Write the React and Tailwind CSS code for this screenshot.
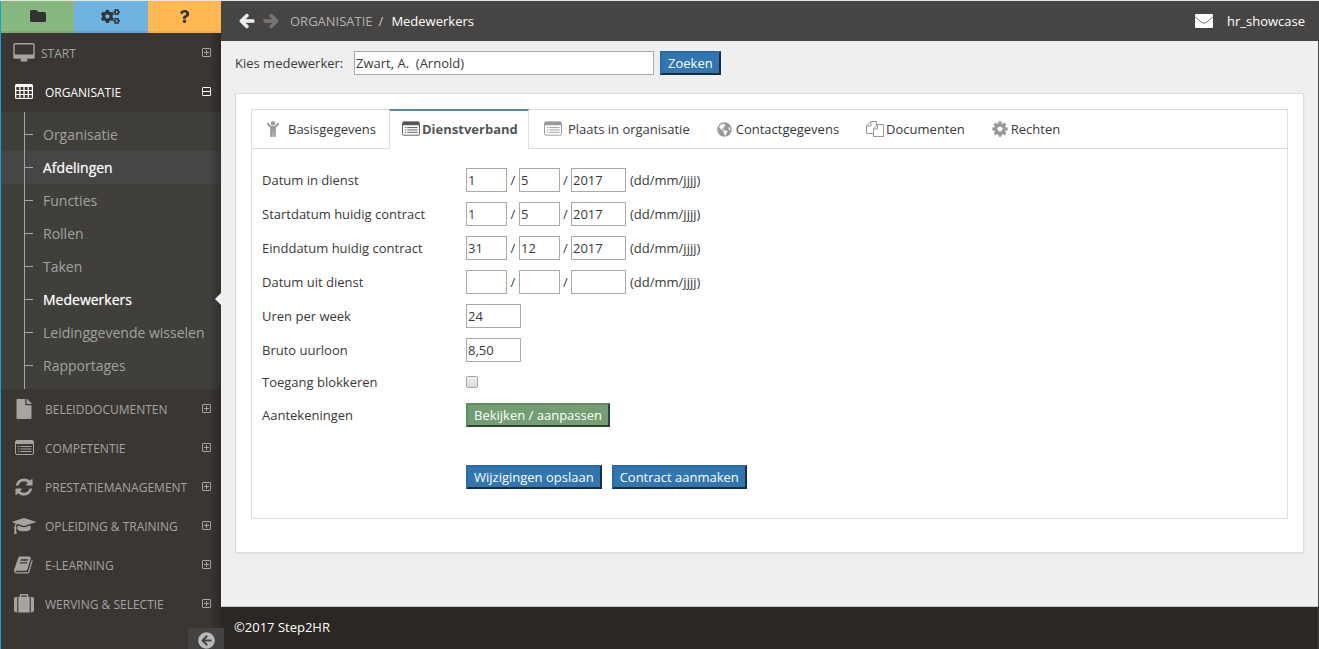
import React from "react";
import { FaFolder, FaCogs, FaQuestion, FaFile, FaArrowLeft, FaArrowRight, FaArrowCircleLeft, FaChild, FaGlobeAmericas } from "react-icons/fa";

function Glyph({ box = "0 0 1792 1792", d, className }) {
  return (
    <svg viewBox={box} className={className} fill="currentColor" fillRule="evenodd" aria-hidden="true">
      <path d={d} />
    </svg>
  );
}

const DESKTOP =
  "M1728 992v-832q0-13-9.500-22.500t-22.500-9.500h-1600q-13 0-22.500 9.500t-9.500 22.500v832q0 13 9.500 22.500t22.500 9.500h1600q13 0 22.500-9.500t9.500-22.500zm128-832v1088q0 66-47 113t-113 47h-544q0 37 16 77.500t32 71 16 43.500q0 26-19 45t-45 19h-512q-26 0-45-19t-19-45q0-14 16-44t32-70 16-78h-544q-66 0-113-47t-47-113v-1088q0-66 47-113t113-47h1600q66 0 113 47t47 113z";
const TABLE =
  "M1.500 0h15a1.500 1.500 0 0 1 1.500 1.500v12a1.500 1.500 0 0 1-1.500 1.500h-15a1.500 1.500 0 0 1-1.500-1.500v-12a1.500 1.500 0 0 1 1.500-1.500z" +
  "M1.300 3v3h2.900v-3zM5.500 3v3h2.900v-3zM9.700 3v3h2.900v-3zM13.900 3v3h2.900v-3z" +
  "M1.300 7v3h2.900v-3zM5.500 7v3h2.900v-3zM9.700 7v3h2.900v-3zM13.900 7v3h2.900v-3z" +
  "M1.300 11v3h2.900v-3zM5.500 11v3h2.900v-3zM9.700 11v3h2.900v-3zM13.900 11v3h2.900v-3z";
const REFRESH =
  "M1639 1056q0 5-1 7-64 268-268 434.500t-478 166.500q-146 0-282.500-55t-243.500-157l-129 129q-19 19-45 19t-45-19-19-45v-448q0-26 19-45t45-19h448q26 0 45 19t19 45-19 45l-137 137q71 66 161 102t187 36q134 0 250-65t186-179q11-17 53-117 8-23 30-23h192q13 0 22.500 9.500t9.500 22.500zm25-800v448q0 26-19 45t-45 19h-448q-26 0-45-19t-19-45 19-45l138-138q-148-137-349-137-134 0-250 65t-186 179q-11 17-53 117-8 23-30 23h-199q-13 0-22.500-9.500t-9.500-22.500v-7q65-268 270-434.500t480-166.500q146 0 284 55.500t245 156.500l130-129q19-19 45-19t45 19 19 45z";
const CAP =
  "M1774 836l18 316q4 69-82 128t-235 93.500-323 34.500-323-34.500-235-93.500-82-128l18-316 574 181q22 7 48 7t48-7zm530-324q0 23-22 31l-1120 352q-4 1-10 1t-10-1l-652-206q-43 34-71 111.500t-34 178.500q63 36 63 109 0 69-58 107l58 433q2 14-8 25-9 11-24 11h-192q-15 0-24-11-10-11-8-25l58-433q-58-38-58-107 0-73 65-111 11-207 98-330l-333-104q-22-8-22-31t22-31l1120-352q4-1 10-1t10 1l1120 352q22 8 22 31z";
const BOOK =
  "M1639 478q40 57 18 129l-275 906q-19 64-76.500 107.500t-122.500 43.500h-923q-77 0-148.500-53.500t-99.500-131.500q-24-67-2-127 0-4 3-27t4-37q1-8-3-21.500t-3-19.500q2-11 8-21t16.500-23.500 16.500-23.500q23-38 45-91.500t30-91.500q3-10 .5-30t-.5-28q3-11 17-28t17-23q21-36 42-92t25-90q1-9-2.500-32t.5-28q4-13 22-30.500t22-22.500q19-26 42.500-84.500t27.500-96.500q1-8-3-25.500t-2-26.500q2-8 9-18t18-23 17-21q8-12 16.500-30.500t15-35 16-36 19.500-32 26.500-23.500 36-11.500 47.500 5.500l-1 3q38-9 51-9h761q74 0 114 56t18 130l-274 906q-36 119-71.500 153.500t-128.500 34.500h-869q-27 0-38 15-11 16-1 43 24 70 144 70h923q29 0 56-15.500t35-41.500l300-987q7-22 5-57 38 15 59 43zm-1064 2q-4 13 2 22.500t20 9.500h608q13 0 25.500-9.500t16.500-22.500l21-64q4-13-2-22.500t-20-9.500h-608q-13 0-25.500 9.500t-16.500 22.500zm-83 256q-4 13 2 22.500t20 9.500h608q13 0 25.500-9.500t16.500-22.500l21-64q4-13-2-22.500t-20-9.500h-608q-13 0-25.500 9.500t-16.500 22.500z";
const SUITCASE =
  "M640 256h512v-128h-512v128zm-352 0v1408h-64q-92 0-158-66t-66-158v-960q0-92 66-158t158-66h64zm1120 0v1408h-1024v-1408h128v-160q0-40 28-68t68-28h576q40 0 68 28t28 68v160h128zm384 224v960q0 92-66 158t-158 66h-64v-1408h64q92 0 158 66t66 158z";
const COG =
  "M1152 896q0-106-75-181t-181-75-181 75-75 181 75 181 181 75 181-75 75-181zm512-109v222q0 12-8 23t-20 13l-185 28q-19 54-39 91 35 50 107 138 10 12 10 25t-9 23q-27 37-99 108t-94 71q-12 0-26-9l-138-108q-44 23-91 38-16 136-29 186-7 28-36 28h-222q-14 0-24.500-8.500t-11.500-21.500l-28-184q-49-16-90-37l-141 107q-10 9-25 9-14 0-25-11-126-114-165-168-7-10-7-23 0-12 8-23 15-21 51-66.500t54-70.500q-27-50-41-99l-183-27q-13-2-21-12.500t-8-23.500v-222q0-12 8-23t19-13l186-28q14-46 39-92-40-57-107-138-10-12-10-24 0-10 9-23 26-36 98.500-107.500t94.500-71.500q13 0 26 10l138 107q44-23 91-38 16-136 29-186 7-28 36-28h222q14 0 24.500 8.500t11.500 21.500l28 184q49 16 90 37l142-107q9-9 24-9 13 0 25 10 129 119 165 170 7 8 7 22 0 12-8 23-15 21-51 66.500t-54 70.500q26 50 41 98l183 28q13 2 21 12.500t8 23.500z";

function ListIcon({ className }) {
  return (
    <svg viewBox="0 0 19 16" className={className} aria-hidden="true">
      <rect x="0.5" y="0.5" width="18" height="14" rx="1.500" fill="none" stroke="currentColor" />
      <path d="M1 0.500h17v3.500h-17z" fill="currentColor" />
      <path d="M3 6.500h1.500M3 9h1.500M3 11.500h1.500M5.500 6.500h11M5.500 9h11M5.500 11.500h11" stroke="currentColor" fill="none" />
    </svg>
  );
}

function DocsIcon() {
  return (
    <svg viewBox="0 0 18 16" className="h-4 w-[18px]" fill="none" stroke="currentColor" aria-hidden="true">
      <path d="M7 12.500H0.500V5L5 0.500h5.500V4M5 0.500V5H0.500" />
      <path d="M11.500 3.500h6v12h-10V8zM11.500 3.500V8h-4" />
    </svg>
  );
}

function Toggle({ open }) {
  return (
    <svg viewBox="0 0 9 9" className="h-[9px] w-[9px]" fill="none" stroke="currentColor" aria-hidden="true">
      <rect x="0.5" y="0.5" width="8" height="8" rx="0.500" />
      <path d={open ? "M0 4.500h9" : "M2 4.500h5M4.500 2v5"} />
    </svg>
  );
}

function Section({ icon, label, open, narrow }) {
  return (
    <a href="#" className={"flex h-[39px] items-center pr-2.5 text-xs leading-5 " + (open ? "font-medium text-white" : "text-[#a5a4a2]")}>
      <span className={narrow ? "ml-3 flex w-[22px] justify-center pt-px" : "ml-[11px] flex w-6 justify-center pt-px"}>{icon}</span>
      <span className={"flex-1 pt-0.5 " + (narrow ? "ml-1.5" : "ml-[9px]")}>{label}</span>
      <Toggle open={open} />
    </a>
  );
}

const SUB = ["Organisatie", "Afdelingen", "Functies", "Rollen", "Taken", "Medewerkers", "Leidinggevende wisselen", "Rapportages"];

function SubItem({ label }) {
  const current = label === "Medewerkers";
  const hover = label === "Afdelingen";
  return (
    <li className={"relative " + (hover ? "bg-[#464644]" : "")}>
      <a href="#" className={"flex h-[33px] items-center text-sm " + (current || hover ? "text-white [text-shadow:0_0_1px_#ffffff99]" : "text-[#a2a2a0]")}>
        <span className="ml-6 h-px w-2 bg-[#a5a4a2]" />
        <span className="ml-2.5">{label}</span>
      </a>
      {current && (
        <svg viewBox="0 0 6 12" className="absolute right-0 top-[10px] z-10 h-3 w-1.5" fill="#efefef" aria-hidden="true">
          <path d="M6 0L0 6l6 6z" />
        </svg>
      )}
    </li>
  );
}

function Sidebar() {
  return (
    <aside className="relative flex w-[221px] shrink-0 flex-col border-l border-[#0ea5c6] bg-[#3a3633]">
      <div className="flex h-8 text-[#333]">
        <button aria-label="Documenten" className="flex flex-1 items-center justify-center border-b-2 border-[#7daa74] bg-[#87b87f]">
          <FaFolder size={16} />
        </button>
        <button aria-label="Instellingen" className="flex flex-1 items-center justify-center border-b-2 border-[#66a5d3] bg-[#6fb3e0]">
          <FaCogs size={19} />
        </button>
        <button aria-label="Help" className="flex flex-1 items-center justify-center border-b-2 border-[#f4ad4d] bg-[#ffb752]">
          <FaQuestion size={13} />
        </button>
      </div>
      <nav>
        <Section label="START" narrow icon={<Glyph box="-64 0 1920 1792" d={DESKTOP} className="h-5 w-[22px]" />} />
        <Section label="ORGANISATIE" open icon={<Glyph box="0 0 18 16" d={TABLE} className="h-4 w-[18px]" />} />
        <div className="relative border-t border-[#383734] bg-[#403f3c] pb-[7px] pt-[6px]">
          <span className="absolute inset-y-0 left-[23px] z-10 w-px bg-[#a5a4a2]" />
          <ul>
            {SUB.map((s) => (
              <SubItem key={s} label={s} />
            ))}
          </ul>
        </div>
        <Section label="BELEIDDOCUMENTEN" icon={<FaFile size={20} />} />
        <Section label="COMPETENTIE" icon={<ListIcon className="h-4 w-[19px]" />} />
        <Section label="PRESTATIEMANAGEMENT" icon={<Glyph d={REFRESH} className="h-5 w-5" />} />
        <Section label="OPLEIDING & TRAINING" icon={<Glyph box="0 0 2304 1792" d={CAP} className="h-5 w-6" />} />
        <Section label="E-LEARNING" icon={<Glyph d={BOOK} className="h-5 w-5" />} />
        <Section label="WERVING & SELECTIE" icon={<Glyph d={SUITCASE} className="h-5 w-5" />} />
      </nav>
      <div className="pointer-events-none absolute bottom-0 right-0 top-8 w-3 bg-linear-to-r from-transparent to-black/25" />
      <button aria-label="Menu inklappen" className="absolute -right-[3px] bottom-0 z-20 flex h-[21px] w-9 items-start justify-center rounded-tl bg-[#444341] pt-1 text-[#bababa]">
        <FaArrowCircleLeft size={17} className="shrink-0" />
      </button>
    </aside>
  );
}

const FIELD = "h-6 border border-[#a9a9a9] bg-white px-px text-[13px] text-[#393939] outline-none ";
const BUTTON = "h-6 border-2 px-1.5 text-[13px] leading-5 text-white whitespace-nowrap ";
const BLUE = "border-t-[#2b6aa3] border-l-[#2b6aa3] border-r-[#132e46] border-b-[#132e46] bg-[#3276b1]";
const GREEN = "border-t-[#5f9163] border-l-[#5f9163] border-r-[#2c442f] border-b-[#2c442f] bg-[#739e73]";

const DATES = [
  ["in", "Datum in dienst", "1", "5", "2017"],
  ["start", "Startdatum huidig contract", "1", "5", "2017"],
  ["eind", "Einddatum huidig contract", "31", "12", "2017"],
  ["uit", "Datum uit dienst", "", "", ""],
];

function Row({ id, label, className = "h-[34px]", children }) {
  return (
    <div className={"flex items-center " + className}>
      <label htmlFor={id} className="w-[204px] shrink-0">{label}</label>
      {children}
    </div>
  );
}

function Tab({ children, className = "" }) {
  return (
    <button role="tab" aria-selected="false" className={"flex items-center border-b border-[#ddd] text-[#999] " + className}>
      {children}
    </button>
  );
}

const Name = ({ children }) => <span className="text-[#393939]">{children}</span>;

function Panel() {
  return (
    <section className="mx-[14px] border border-[#dcdcdc] bg-white px-[15px] pb-[33px] pt-[15px] shadow-xs">
      <div className="border border-[#ddd]">
        <div role="tablist" className="flex h-[39px]">
          <Tab className="w-[137px] pl-[13px]">
            <FaChild size={16} className="mr-[7px]" />
            <Name>Basisgegevens</Name>
          </Tab>
          <button role="tab" aria-selected="true" className="-mt-px flex w-[140px] items-center gap-0.5 border-x border-t-2 border-x-[#ddd] border-t-[#5b8ba0] pb-0.5 pl-3 font-bold text-[#555]">
            <ListIcon className="h-4 w-[18px]" />
            Dienstverband
          </button>
          <Tab className="pl-[15px]">
            <ListIcon className="mr-1.5 h-4 w-[18px]" />
            <Name>Plaats in organisatie</Name>
          </Tab>
          <Tab className="pl-[27px]">
            <FaGlobeAmericas size={15} className="mr-1" />
            <Name>Contactgegevens</Name>
          </Tab>
          <Tab className="gap-0.5 pl-[27px]">
            <DocsIcon />
            <Name>Documenten</Name>
          </Tab>
          <Tab className="pl-[26px]">
            <Glyph d={COG} className="mr-0.5 h-[18px] w-[18px]" />
            <Name>Rechten</Name>
          </Tab>
          <div className="flex-1 border-b border-[#ddd]" />
        </div>
        <form className="px-2.5 pb-[29px] pt-[14px]" onSubmit={(e) => e.preventDefault()}>
          {DATES.map(([id, label, d, m, y]) => (
            <Row key={id} id={id} label={label}>
              <input id={id} defaultValue={d} className={FIELD + "w-[41px]"} />
              <span className="w-3 text-center">/</span>
              <input aria-label={label + " maand"} defaultValue={m} className={FIELD + "w-[41px]"} />
              <span className="w-[11px] text-center">/</span>
              <input aria-label={label + " jaar"} defaultValue={y} className={FIELD + "w-[55px]"} />
              <span className="ml-1">(dd/mm/jjjj)</span>
            </Row>
          ))}
          <Row id="uren" label="Uren per week">
            <input id="uren" defaultValue="24" className={FIELD + "w-[55px]"} />
          </Row>
          <Row id="loon" label="Bruto uurloon">
            <input id="loon" defaultValue="8,50" className={FIELD + "w-[55px]"} />
          </Row>
          <Row id="blok" label="Toegang blokkeren" className="h-[30px]">
            <input
              id="blok"
              type="checkbox"
              className="h-3 w-3 appearance-none rounded-xs border border-[#a6a6a6] bg-linear-to-b from-[#eee] to-[#dcdcdc] checked:bg-[#3276b1]"
            />
          </Row>
          <Row id="notities" label="Aantekeningen" className="h-9">
            <button id="notities" type="button" className={BUTTON + GREEN}>Bekijken / aanpassen</button>
          </Row>
          <div className="ml-[204px] mt-8 flex gap-2.5">
            <button type="submit" className={BUTTON + BLUE}>Wijzigingen opslaan</button>
            <button type="button" className={BUTTON + BLUE}>Contract aanmaken</button>
          </div>
        </form>
      </div>
    </section>
  );
}

export default function App() {
  return (
    <div className="flex min-h-screen border-t border-[#e4e6e4] bg-[#efefef] font-['Open_Sans','Liberation_Sans',sans-serif] text-[13px] leading-5 text-[#393939]">
      <Sidebar />
      <div className="flex min-w-0 flex-1 flex-col border-r border-[#444341]">
        <header className="flex h-10 items-center bg-[#474543] pl-[18px] pr-[13px] text-white">
          <a href="#" aria-label="Terug" className="text-[#eee]"><FaArrowLeft size={16} stroke="currentColor" strokeWidth={36} /></a>
          <a href="#" aria-label="Vooruit" className="ml-2 text-[#777573]"><FaArrowRight size={16} stroke="currentColor" strokeWidth={36} /></a>
          <a href="#" className="ml-[11px] text-[#b5b3b1]">ORGANISATIE</a>
          <span className="ml-1.5 text-[#ccc]">/</span>
          <span className="ml-2">Medewerkers</span>
          <a href="#" aria-label="Berichten" className="ml-auto">
            <svg viewBox="0 0 18 14" className="h-[14px] w-[18px]" aria-hidden="true">
              <rect width="18" height="14" rx="1" fill="#fff" />
              <path d="M0 3l7 5.500q2 1.500 4 0l7-5.500" fill="none" stroke="#77757a" />
            </svg>
          </a>
          <a href="#" className="ml-[14px]">hr_showcase</a>
        </header>
        <main className="flex-1 pb-8">
          <form className="mb-[18px] flex items-center pl-[14px] pt-2.5" onSubmit={(e) => e.preventDefault()}>
            <label htmlFor="medewerker" className="w-[119px]">Kies medewerker:</label>
            <input id="medewerker" defaultValue="Zwart, A.  (Arnold)" className={FIELD + "w-[300px]"} />
            <button type="submit" className={"ml-1.5 " + BUTTON + BLUE}>Zoeken</button>
          </form>
          <Panel />
        </main>
        <footer className="flex h-[43px] items-center border-t border-[#c8c8c8] bg-[#2b2724] pb-0.5 pl-[13px] text-white">©2017 Step2HR</footer>
      </div>
    </div>
  );
}
